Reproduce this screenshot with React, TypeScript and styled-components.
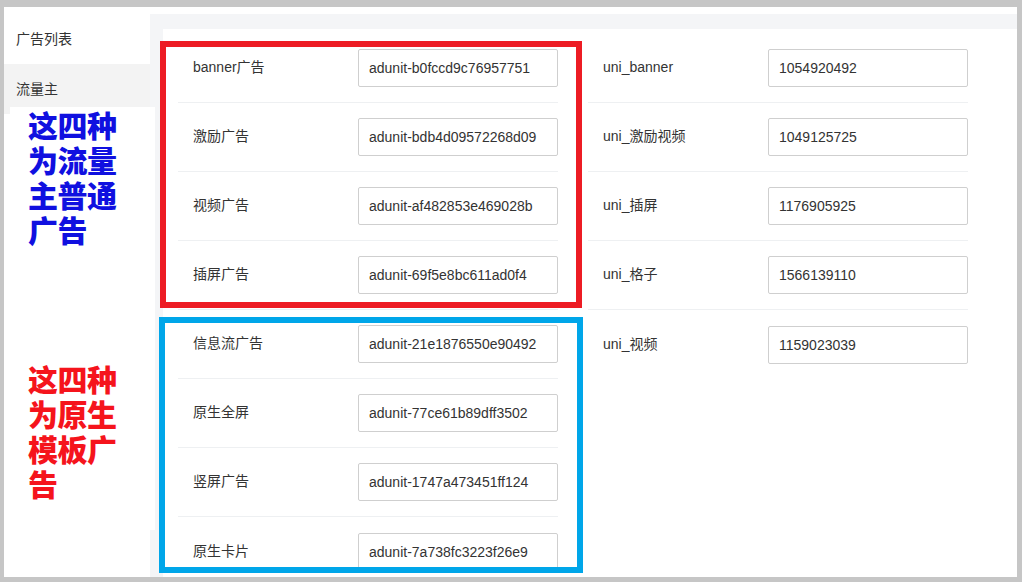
import React from 'react';
import styled, { createGlobalStyle } from 'styled-components';

const GlobalStyle = createGlobalStyle`
  html, body {
    margin: 0;
    padding: 0;
    height: 582px;
    overflow: hidden;
    background: #c6c6c6;
    font-family: "Liberation Sans", "Noto Sans CJK SC", sans-serif;
    color: #333;
  }
  * { box-sizing: border-box; }
`;

const leftRows = [
  { label: 'banner广告', value: 'adunit-b0fccd9c76957751' },
  { label: '激励广告', value: 'adunit-bdb4d09572268d09' },
  { label: '视频广告', value: 'adunit-af482853e469028b' },
  { label: '插屏广告', value: 'adunit-69f5e8bc611ad0f4' },
  { label: '信息流广告', value: 'adunit-21e1876550e90492' },
  { label: '原生全屏', value: 'adunit-77ce61b89dff3502' },
  { label: '竖屏广告', value: 'adunit-1747a473451ff124' },
  { label: '原生卡片', value: 'adunit-7a738fc3223f26e9' },
];

const rightRows = [
  { label: 'uni_banner', value: '1054920492' },
  { label: 'uni_激励视频', value: '1049125725' },
  { label: 'uni_插屏', value: '1176905925' },
  { label: 'uni_格子', value: '1566139110' },
  { label: 'uni_视频', value: '1159023039' },
];

const App: React.FC = () => {
  return (
    <Frame>
      <GlobalStyle />
      <TopStrip />
      <Body>
        <Sidebar>
          <NavItem>广告列表</NavItem>
          <NavItem active>流量主</NavItem>
        </Sidebar>
        <Main>
          <Card>
            <Column>
              {leftRows.map((r) => (
                <Row key={r.label}>
                  <Label>{r.label}</Label>
                  <Input readOnly value={r.value} />
                </Row>
              ))}
            </Column>
            <Column>
              {rightRows.map((r) => (
                <Row key={r.label}>
                  <Label>{r.label}</Label>
                  <Input readOnly value={r.value} />
                </Row>
              ))}
            </Column>
          </Card>
        </Main>
      </Body>

      {/* 截图上的标注 */}
      <NoteBox>
        <NoteText color="#1010e0">这四种为流量主普通广告</NoteText>
        <NoteText color="#f5141c" gap={114}>这四种为原生模板广告</NoteText>
      </NoteBox>
      <MarkBox color="#ed1c24" style={{ left: 156, top: 34, width: 422, height: 267 }} />
      <MarkBox color="#00a6e9" style={{ left: 155, top: 310, width: 424, height: 256 }} />
    </Frame>
  );
};

const Frame = styled.div`
  position: relative;
  margin: 7px 5px 0 4px;
  height: 570px;
  background: #fff;
  overflow: hidden;
`;

const TopStrip = styled.div`
  height: 7px;
  background: #fff;
`;

const Body = styled.div`
  display: flex;
  height: 563px;
`;

const Sidebar = styled.div`
  width: 146px;
  flex-shrink: 0;
  background: #fff;
`;

const NavItem = styled.div<{ active?: boolean }>`
  height: 50px;
  display: flex;
  align-items: center;
  padding: 0 0 2px 12px;
  font-size: 14px;
  color: #333;
  background: ${(p) => (p.active ? '#f3f3f3' : '#fff')};
`;

const Main = styled.div`
  flex: 1;
  background: #f4f5f7;
  padding: 15px 0 0 13px;
`;

const Card = styled.div`
  height: 100%;
  background: #fff;
  padding: 5px 15px 0;
  display: grid;
  grid-template-columns: 380px 380px;
  column-gap: 30px;
  align-content: start;
`;

const Column = styled.div`
  display: flex;
  flex-direction: column;
`;

const Row = styled.div`
  display: flex;
  align-items: center;
  height: 69px;
  padding-left: 15px;
  border-bottom: 1px solid #eef0f2;
  flex-shrink: 0;

  &:last-child {
    border-bottom: none;
  }
`;

const Label = styled.div`
  width: 165px;
  font-size: 14px;
  line-height: 18px;
  padding-bottom: 2px;
  color: #333;
`;

const Input = styled.input`
  width: 200px;
  height: 38px;
  border: 1px solid #cfcfcf;
  border-radius: 2px;
  padding: 0 10px;
  font-family: "Liberation Sans", "Noto Sans CJK SC", sans-serif;
  font-size: 14px;
  color: #333;
  background: #fff;
  outline: none;
`;

const NoteBox = styled.div`
  position: absolute;
  left: 6px;
  top: 100px;
  width: 145px;
  height: 423px;
  background: #fff;
  padding: 0 0 0 18px;
`;

const NoteText = styled.div<{ color: string; gap?: number }>`
  width: 98px;
  margin-top: ${(p) => p.gap ?? 0}px;
  font-family: "Noto Sans CJK SC", sans-serif;
  font-weight: 900;
  font-size: 30px;
  line-height: 35px;
  letter-spacing: -0.5px;
  color: ${(p) => p.color};
`;

const MarkBox = styled.div<{ color: string }>`
  position: absolute;
  border: 6px solid ${(p) => p.color};
  pointer-events: none;
`;

export default App;
